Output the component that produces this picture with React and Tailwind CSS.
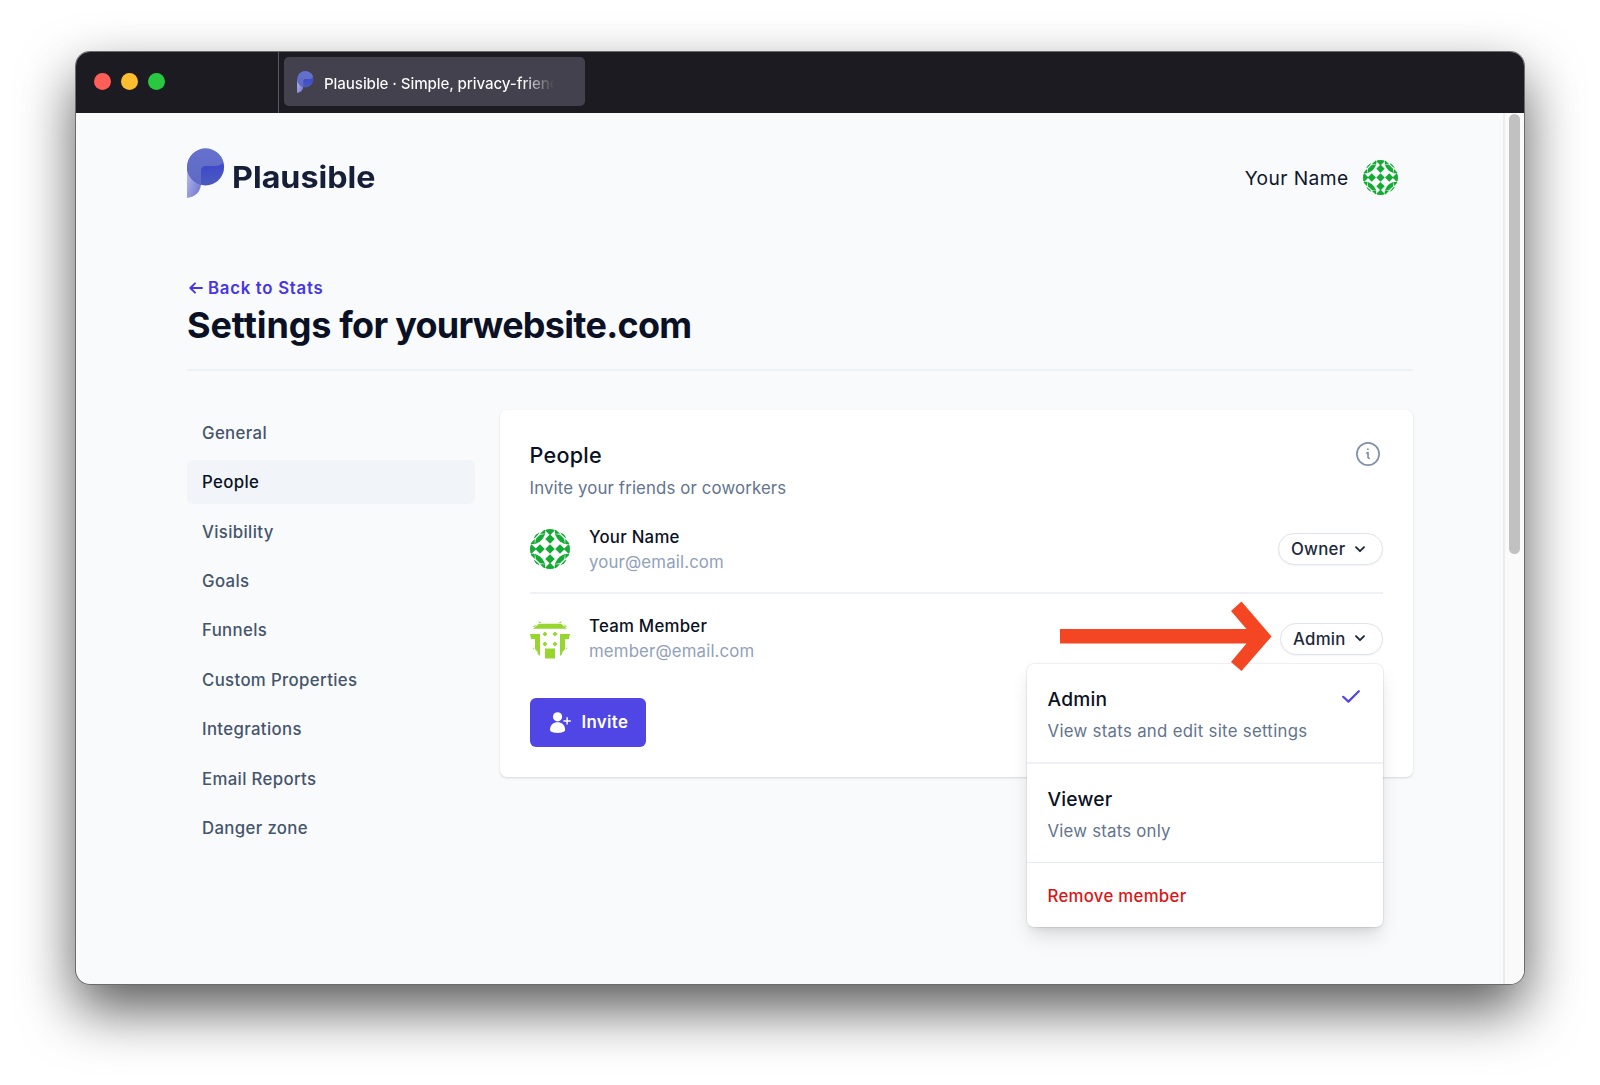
import React from "react";

function LogoMark({ className }) {
  return (
    <svg viewBox="0 0 38 50" className={className}>
      <defs>
        <linearGradient id="tail" x1="0" y1="0.4" x2="0.8" y2="1">
          <stop offset="0" stopColor="#a9b2ea" />
          <stop offset="1" stopColor="#7477cf" />
        </linearGradient>
        <linearGradient id="disc" x1="0.2" y1="0" x2="0.3" y2="1">
          <stop offset="0" stopColor="#6672cd" />
          <stop offset="0.5" stopColor="#3f49cb" />
          <stop offset="1" stopColor="#4b5abc" />
        </linearGradient>
        <linearGradient id="overlap" x1="0.3" y1="0" x2="0.2" y2="1">
          <stop offset="0" stopColor="#6571cd" />
          <stop offset="1" stopColor="#5f69c2" />
        </linearGradient>
        <clipPath id="discClip">
          <circle cx="18.6" cy="19" r="18.5" />
        </clipPath>
      </defs>
      <path d="M0 19 H14 V36 Q13 48 0 50 Z" fill="url(#tail)" />
      <circle cx="18.6" cy="19" r="18.5" fill="url(#disc)" />
      <path
        d="M0 0 H38 V11 Q36 18 28 18 H19 Q14 18 14 23 V40 H0 Z"
        fill="url(#overlap)"
        clipPath="url(#discClip)"
      />
    </svg>
  );
}

function GreenAvatar({ className }) {
  const diamonds = [
    [4, 0.3], [4, 2], [4, 4], [2, 4], [6, 4], [4, 6], [4, 7.7], [0.3, 4], [7.7, 4],
  ];
  return (
    <svg viewBox="0 0 8 8" className={className}>
      <defs>
        <clipPath id="round8">
          <circle cx="4" cy="4" r="4" />
        </clipPath>
      </defs>
      <g clipPath="url(#round8)" fill="#14ab34">
        {diamonds.map(([x, y]) => (
          <path key={`${x}-${y}`} d={`M${x} ${y - 0.95} l0.95 0.95 l-0.95 0.95 l-0.95 -0.95 Z`} />
        ))}
        {[0, 90, 180, 270].map((a) => (
          <g key={a} transform={`rotate(${a} 4 4)`}>
            <path d="M1 3.05 L1.15 2 L2 1.15 L3.05 1 L2.5 2 L2 2.5 Z" />
            <path d="M2 0.95 L3 0 V0.95 Z M3.1 0.8 L2.6 0 H3 Z M0 3 L0.95 2 V3 Z M0.7 1.9 L1.1 1.1 L1.9 0.7 L1.6 1.15 L1.1 1.7 Z" />
          </g>
        ))}
      </g>
    </svg>
  );
}

function LimeAvatar({ className }) {
  return (
    <svg viewBox="0 0 40 40" className={className}>
      <g fill="#96d62f">
        <path d="M9 4.8 H31 L37 9.8 H3 Z" />
        <path d="M8.5 2 L11.5 4 H9 Z M31.5 2 L28.5 4 H31 Z M3 7.500 L6 5.500 L5 8 Z M37 7.500 L34 5.500 L35 8 Z" />
        <path d="M0 15 H10 V36 L5 30 V20 H1 Z M40 15 H30 V36 L35 30 V20 H39 Z" />
        <path d="M2 28.500 L4.500 31 L3.500 29 Z M7 34 L10 37 V34 Z M33 34 L30 37 V34 Z M38 28.500 L35.500 31 L36.500 29 Z" />
        <path d="M15 29.500 H25 V39.500 H15 Z" />
        {[[15, 15], [25, 15], [15, 25], [25, 25]].map(([x, y]) => (
          <path key={`${x}-${y}`} d={`M${x} ${y - 2.5} l2.5 2.5 l-2.5 2.5 l-2.5 -2.5 Z`} />
        ))}
      </g>
    </svg>
  );
}

function Chevron() {
  return (
    <svg viewBox="0 0 10 7" className="h-[7px] w-[10px]" fill="none" stroke="#1e293b" strokeWidth="1.9" strokeLinecap="round" strokeLinejoin="round">
      <path d="M1 1.2 L5 5.2 L9 1.2" />
    </svg>
  );
}

function RoleButton({ label, className }) {
  return (
    <button className={`flex h-8 items-center justify-between rounded-full border border-[#dfe3eb] bg-white pl-[12.5px] pr-[17px] text-[16.8px] font-medium tracking-[0.25px] text-slate-800 shadow-[0_1px_2px_rgba(0,0,0,0.05)] ${className}`}>
      <span className="pt-[1.5px]">{label}</span>
      <Chevron />
    </button>
  );
}

function Member({ avatar, name, email, children, className }) {
  return (
    <div className={`flex items-start ${className}`}>
      {avatar}
      <div className="ml-[19.5px] flex-1 pt-[0.5px]">
        <div className="text-[16.8px] font-medium leading-[25px] tracking-[0.25px] text-[#0b1124]">{name}</div>
        <div className="text-[16.8px] leading-[25px] tracking-[0.15px] text-slate-400">{email}</div>
      </div>
      {children}
    </div>
  );
}

const navItems = [
  "General",
  "People",
  "Visibility",
  "Goals",
  "Funnels",
  "Custom Properties",
  "Integrations",
  "Email Reports",
  "Danger zone",
];

function RoleMenu() {
  return (
    <div className="absolute left-[527.5px] top-[254px] z-10 h-[263px] w-[356px] rounded-[7px] bg-white shadow-[0_0_0_1px_rgba(0,0,0,0.06),0_12px_20px_-3px_rgba(0,0,0,0.12),0_5px_8px_-4px_rgba(0,0,0,0.1)]">
      <div className="flex h-[100px] justify-between border-b-2 border-[#f0f1f6] pl-[20.5px] pr-[23px] pt-[20px]">
        <div>
          <div className="text-[19.2px] font-medium leading-[30px] tracking-[0.2px] text-[#0b1124]">Admin</div>
          <div className="mt-1 whitespace-nowrap text-[16.8px] leading-[26px] tracking-[0.3px] text-slate-500">View stats and edit site settings</div>
        </div>
        <svg viewBox="0 0 18 13" className="mt-[6px] h-[13px] w-[18px]" fill="none" stroke="#4f46e5" strokeWidth="2.2" strokeLinecap="round" strokeLinejoin="round">
          <path d="M1.2 6.8 L6.4 11.6 L16.8 1.2" />
        </svg>
      </div>
      <div className="h-[99px] border-b border-[#e6eaf1] pl-[20.5px] pt-[20px]">
        <div className="text-[19.2px] font-medium leading-[30px] tracking-[0.2px] text-[#0b1124]">Viewer</div>
        <div className="mt-1 text-[16.8px] leading-[26px] tracking-[0.22px] text-slate-500">View stats only</div>
      </div>
      <div className="pl-[20.5px] pt-[20px] text-[16.8px] font-medium leading-[26px] tracking-[0.28px] text-[#dc1414]">Remove member</div>
    </div>
  );
}

export default function App() {
  return (
    <div className="h-[1085px] w-[1600px] overflow-hidden bg-white pl-[76px] pt-[52px] font-['Inter',sans-serif] antialiased">
      <div className="h-[932px] w-[1448px] overflow-hidden rounded-[14px] bg-[#f9fafc] shadow-[0_0_0_1px_#6b6b6b,0_25px_56px_rgba(0,0,0,0.66)]">
        <header className="flex h-[61px] bg-[#1c1b22]">
          <div className="flex w-[203px] items-center gap-[10px] border-r border-[#5b5a66] pb-[2px] pl-[18px]">
            <span className="size-[17px] rounded-full bg-[#ff5f57]" />
            <span className="size-[17px] rounded-full bg-[#febc2e]" />
            <span className="size-[17px] rounded-full bg-[#28c840]" />
          </div>
          <div className="ml-[5px] mt-[5px] flex h-[49px] w-[301px] items-center rounded-[5px] bg-[#42414d] pl-[13px]">
            <LogoMark className="h-[22px] w-[17px]" />
            <div className="ml-[10px] w-[230px] overflow-hidden whitespace-nowrap bg-linear-to-r from-white from-86% to-transparent bg-clip-text pt-[5px] text-[15.2px] font-medium tracking-[-0.12px] text-transparent">
              Plausible · Simple, privacy-friend
            </div>
          </div>
        </header>
        <div className="flex h-[871px]">
          <main className="w-[1427px] px-[111px] pt-[35px]">
            <div className="flex h-[50px] w-[1226px] items-start justify-between">
              <div className="flex items-start">
                <LogoMark className="-mt-[0.5px] h-[50px] w-[38px]" />
                <div className="ml-[7px] mt-[6px] origin-left scale-x-[1.075] text-[30px] font-bold leading-[46px] text-[#161f38]">Plausible</div>
              </div>
              <div className="mr-[15px] mt-[12px] flex items-center">
                <span className="mt-[2px] text-[19.2px] tracking-[0.4px] text-slate-900">Your Name</span>
                <GreenAvatar className="ml-[14.5px] size-[35px]" />
              </div>
            </div>
            <div className="mt-[77px] flex items-center gap-[5px] text-[16.8px] font-semibold leading-[26px] tracking-[0.72px] text-[#4636e3]">
              <svg viewBox="0 0 14 12" className="ml-[2px] h-3 w-[14px]" fill="none" stroke="currentColor" strokeWidth="1.9" strokeLinecap="round" strokeLinejoin="round">
                <path d="M13 6 H1.5 M6 1.3 L1.3 6 L6 10.7" />
              </svg>
              Back to Stats
            </div>
            <h1 className="mt-[2px] text-[36px] font-bold leading-[44px] tracking-[-0.72px] text-[#0b1124]">
              <span className="tracking-[-0.1px]">Settings</span> for yourwebsite.com
            </h1>
            <div className="mt-[22px] h-0.5 w-[1226px] bg-[#eef1f6]" />
            <div className="flex w-[1226px] pt-[39px]">
              <nav className="w-[288px] pt-px text-[16.8px] font-medium tracking-[0.35px]">
                {navItems.map((item) => (
                  <div
                    key={item}
                    className={`mb-[5.4px] flex h-11 items-center rounded-md pl-[15px] pt-px ${item === "People" ? "bg-[#f1f4f9] text-[#0b1124]" : "text-slate-600"}`}
                  >
                    {item}
                  </div>
                ))}
              </nav>
              <section className="relative ml-[24.5px] h-[367px] w-[913.5px] rounded-[7px] bg-white px-[30px] shadow-[0_1px_3px_rgba(0,0,0,0.1),0_1px_2px_rgba(0,0,0,0.05)]">
                <div className="flex justify-between pt-[30px]">
                  <div>
                    <h2 className="text-[21.6px] font-medium leading-[30px] tracking-[0.25px] text-[#0b1124]">People</h2>
                    <p className="mt-[6px] text-[16.8px] leading-[25px] tracking-[0.14px] text-slate-500">Invite your friends or coworkers</p>
                  </div>
                  <svg viewBox="0 0 24 24" className="mr-[3px] mt-[2px] size-6" fill="none" stroke="#8290a8" strokeWidth="1.7">
                    <circle cx="12" cy="12" r="11.1" />
                    <path d="M10.2 10.8 H12 V15 Q12 16.5 13.8 16.300" />
                    <path d="M11.9 6.5 V8.100" />
                  </svg>
                </div>
                <Member
                  className="mt-[23px] h-[68px]"
                  avatar={<GreenAvatar className="mt-[5px] size-10" />}
                  name="Your Name"
                  email="your@email.com"
                >
                  <RoleButton label="Owner" className="mt-[9px] w-[105.5px]" />
                </Member>
                <div className="h-0.5 bg-[#f0f1f6]" />
                <Member
                  className="mt-[19.5px] h-[84px]"
                  avatar={<LimeAvatar className="mt-[5px] size-10" />}
                  name="Team Member"
                  email="member@email.com"
                >
                  <RoleButton label="Admin" className="mt-[9px] w-[103.5px]" />
                </Member>
                <button className="flex h-[49.5px] w-[116px] items-center rounded-[6px] bg-[#4f46e5] pl-5 text-[16.8px] font-semibold tracking-[0.35px] text-white">
                  <svg viewBox="0 0 20 20" className="h-[21px] w-[21px]" fill="currentColor">
                    <circle cx="7.2" cy="4.6" r="4.4" />
                    <path d="M0 17 C0 7.5 14.4 7.5 14.4 17 C14.4 21 0 21 0 17 Z" />
                    <path d="M15.6 5 H17 V7.8 H19.8 V9.2 H17 V12 H15.6 V9.2 H12.8 V7.8 H15.6 Z" />
                  </svg>
                  <span className="ml-[11px] pt-[1.5px]">Invite</span>
                </button>
                <RoleMenu />
                <svg viewBox="0 0 212 70" className="absolute left-[560.5px] top-[191px] z-20 h-[70px] w-[212px]">
                  <path d="M0 28 H186.500 L171 10 L181.500 0.500 L211.500 35.500 L181.500 70 L171 61 L186.500 42.500 H0 Z" fill="#f44622" />
                </svg>
              </section>
            </div>
          </main>
          <aside className="w-[21px] border-l-2 border-[#ececec] bg-[#fafafa] pl-[4px] pt-[1px]">
            <div className="h-[440px] w-[11px] rounded-full bg-[#c1c1c1]" />
          </aside>
        </div>
      </div>
    </div>
  );
}
